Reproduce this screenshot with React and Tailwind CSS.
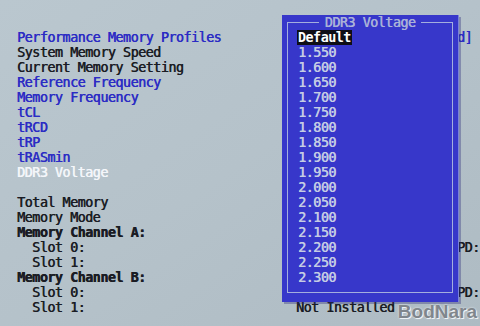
const BLUE = 'text-[#2b2bc4]';
const BLACK = 'text-[#1a1c24]';

// value column text only where it peeks out from under the popup
const rows = [
  { label: 'Performance Memory Profiles', color: BLUE, value: 'd]', valueColor: BLUE },
  { label: 'System Memory Speed', color: BLACK },
  { label: 'Current Memory Setting', color: BLACK },
  { label: 'Reference Frequency', color: BLUE },
  { label: 'Memory Frequency', color: BLUE },
  { label: 'tCL', color: BLUE },
  { label: 'tRCD', color: BLUE },
  { label: 'tRP', color: BLUE },
  { label: 'tRASmin', color: BLUE },
  { label: 'DDR3 Voltage', color: 'text-[#f4f6fa]' },
  { label: '', color: BLACK },
  { label: 'Total Memory', color: BLACK },
  { label: 'Memory Mode', color: BLACK },
  { label: 'Memory Channel A:', color: BLACK, bold: true },
  { label: '  Slot 0:', color: BLACK, value: 'PD:', valueColor: BLACK },
  { label: '  Slot 1:', color: BLACK },
  { label: 'Memory Channel B:', color: BLACK, bold: true },
  { label: '  Slot 0:', color: BLACK, value: 'PD:', valueColor: BLACK },
  { label: '  Slot 1:', color: BLACK, value: 'Not Installed', valueColor: BLACK, near: true },
];

const voltages = [
  '1.550', '1.600', '1.650', '1.700', '1.750', '1.800', '1.850', '1.900',
  '1.950', '2.000', '2.050', '2.100', '2.150', '2.200', '2.250', '2.300',
];

function VoltagePopup() {
  return (
    <div className="absolute left-[282px] top-[15px] w-[177px] h-[287px] bg-[#3737ca] border-r border-[#7a82d8] shadow-[2px_2px_0_rgba(40,40,120,0.35)]">
      {/* inner frame */}
      <div className="absolute left-[5px] right-[5px] top-[7px] bottom-[9px] border border-[#a4aede]" />
      <div className="absolute left-0 right-0 top-0 flex justify-center">
        <span className="px-[6px] bg-[#3737ca] text-[#aab2d8] leading-[15px]">DDR3 Voltage</span>
      </div>
      <div className="absolute left-[15px] top-[15px] flex flex-col">
        <div className="h-[15px] leading-[15px]">
          <span className="bg-[#0e0e16] text-white font-bold px-px [text-shadow:none]">Default</span>
        </div>
        {voltages.map((v) => (
          <div key={v} className="h-[15px] leading-[15px] pl-px text-[#c4cce4]">{v}</div>
        ))}
      </div>
    </div>
  );
}

export default function App() {
  return (
    <div
      className="relative w-[480px] h-[326px] overflow-hidden bg-gradient-to-br from-[#bac7cf] via-[#b5c2ca] to-[#aebbc3] text-[13.4px] tracking-[-0.5px] [text-shadow:0.45px_0_0_currentColor]"
      style={{ fontFamily: '"DejaVu Sans Mono", "Liberation Mono", monospace' }}
    >
      <div className="flex flex-col pt-[30px] pl-[17px]">
        {rows.map((r, i) => (
          <div key={i} className="flex h-[15px] leading-[15px] whitespace-pre">
            <span className={`w-[279px] shrink-0 ${r.color} ${r.bold ? 'font-bold' : ''}`}>{r.label}</span>
            {r.value && (
              <span className={`${r.valueColor} ${r.near ? '' : 'pl-[161px]'}`}>{r.value}</span>
            )}
          </div>
        ))}
      </div>

      <VoltagePopup />

      {/* watermark */}
      <div
        className="absolute right-[3px] bottom-[5px] text-[19px] font-bold tracking-[0px] text-[#80868c] leading-none"
        style={{ fontFamily: '"Liberation Sans", Arial, sans-serif', textShadow: '0 0 2px #eef2f5, 1px 1px 0 #eef2f5' }}
      >
        BodNara
      </div>
    </div>
  );
}
